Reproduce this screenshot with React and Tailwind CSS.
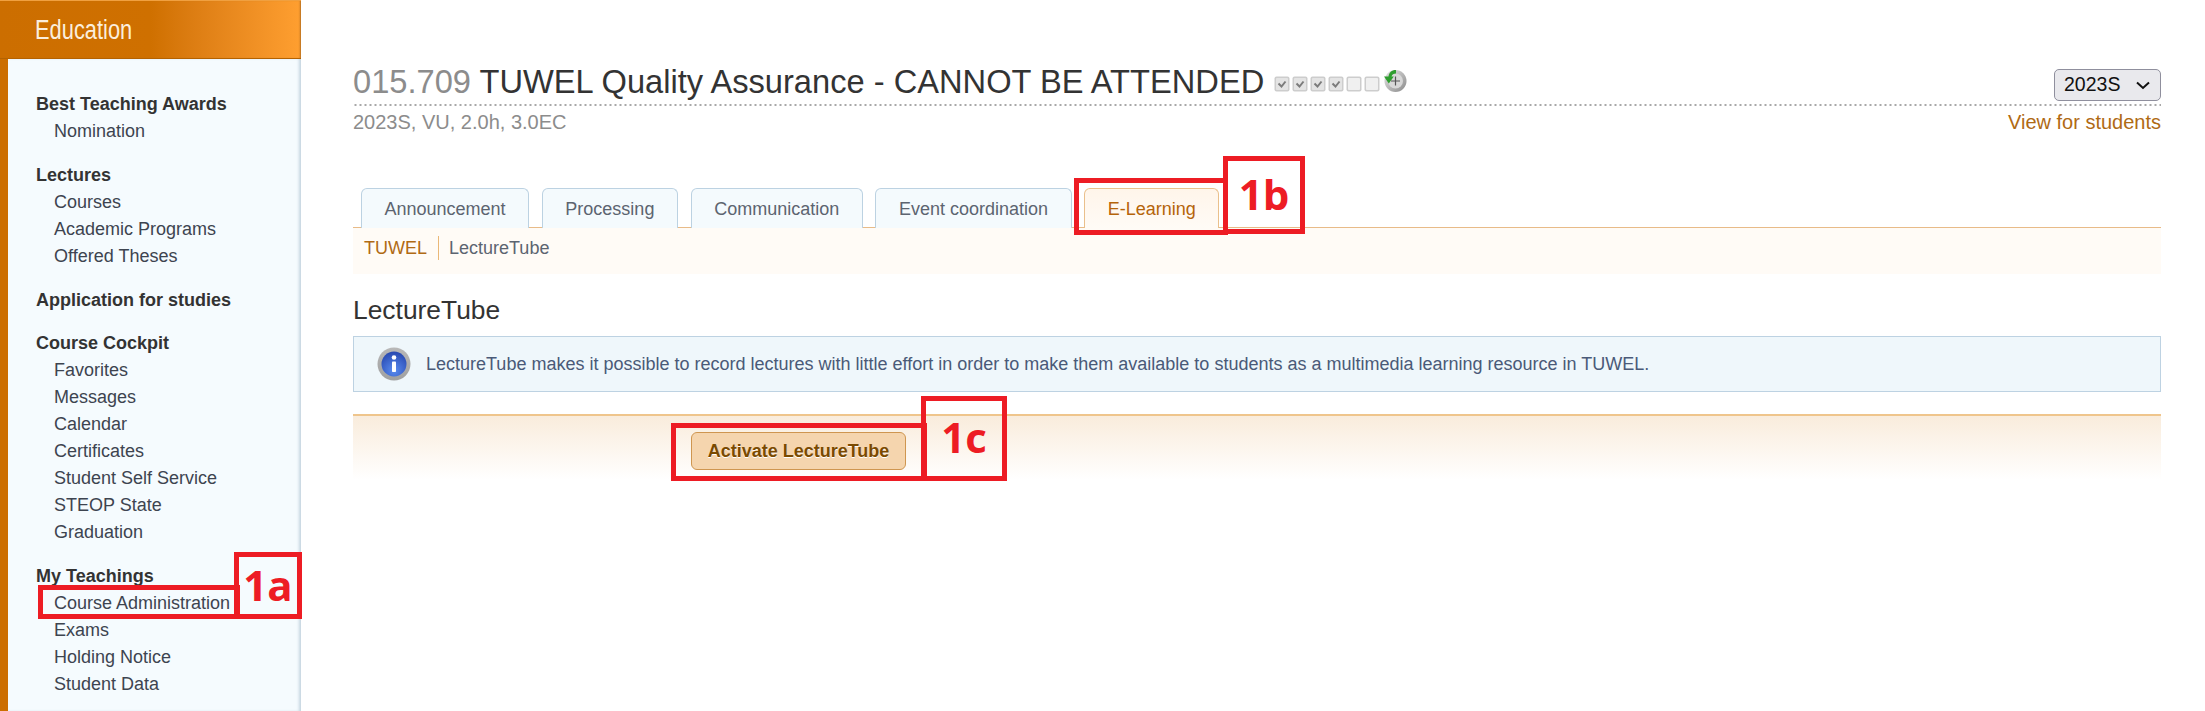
const navGroups = [
  { title: "Best Teaching Awards", items: ["Nomination"] },
  { title: "Lectures", items: ["Courses", "Academic Programs", "Offered Theses"] },
  { title: "Application for studies", items: [] },
  {
    title: "Course Cockpit",
    items: ["Favorites", "Messages", "Calendar", "Certificates", "Student Self Service", "STEOP State", "Graduation"],
  },
  { title: "My Teachings", items: ["Course Administration", "Exams", "Holding Notice", "Student Data"] },
];

const tabs = ["Announcement", "Processing", "Communication", "Event coordination"];

const CheckBox = ({ checked }) => (
  <svg width="16" height="16" viewBox="0 0 16 16" className="shrink-0">
    <rect x="0.5" y="0.5" width="15" height="15" rx="2" fill="#cdcdcd" />
    <rect x="2" y="2" width="12" height="12" rx="1" fill={checked ? "#e4e4e4" : "#f0f0f0"} />
    {checked && <path d="M4.5 7.5 L7.5 10.5 L11.5 5.5" fill="none" stroke="#7c7c7c" strokeWidth="2" />}
  </svg>
);

const ClockIcon = () => (
  <svg width="24" height="24" viewBox="0 0 24 24" className="shrink-0 ml-[1px] -mt-[7px]">
    <defs>
      <linearGradient id="clockRing" x1="0" y1="0" x2="1" y2="1">
        <stop offset="0" stopColor="#e6e6e6" />
        <stop offset="1" stopColor="#8a8a8a" />
      </linearGradient>
    </defs>
    <circle cx="12.5" cy="12" r="11" fill="url(#clockRing)" />
    <circle cx="12.5" cy="12" r="7.5" fill="#d8d8d8" />
    <path d="M12.5 7.5 V16.5 M8 12 H17" stroke="#555" strokeWidth="1.2" fill="none" />
    <path d="M13 1 C8.5 1 6 3.5 5.5 7.5 H1 L5.8 14.5 L10.8 7.5 H8.5 C9 5.5 10.5 4.5 13 4.5 Z" fill="#2f9e2f" />
  </svg>
);

const InfoIcon = () => (
  <svg width="36" height="36" viewBox="0 0 36 36" className="shrink-0">
    <defs>
      <linearGradient id="infoRing" x1="0" y1="0" x2="0" y2="1">
        <stop offset="0" stopColor="#b8b8b8" />
        <stop offset="1" stopColor="#a0a0a0" />
      </linearGradient>
      <radialGradient id="infoFill" cx="0.5" cy="0.75" r="0.7">
        <stop offset="0" stopColor="#5a8cf0" />
        <stop offset="1" stopColor="#2a4cb4" />
      </radialGradient>
    </defs>
    <circle cx="18" cy="18" r="16.5" fill="url(#infoRing)" />
    <circle cx="18" cy="18" r="12.5" fill="url(#infoFill)" />
    <circle cx="18" cy="11.5" r="2.3" fill="#fff" />
    <rect x="16" y="15.5" width="4" height="10.5" rx="0.8" fill="#fff" />
  </svg>
);

const Tab = ({ label, active }) => (
  <div
    className={
      active
        ? "h-[40px] -mb-[1px] pt-[1px] px-[22.5px] flex items-center rounded-t-[6px] border border-b-0 border-[#eac08c] bg-gradient-to-b from-[#fff5ea] to-[#fffbf6] text-[#b5640a]"
        : "h-[40px] -mb-[1px] pt-[1px] px-[22.5px] flex items-center rounded-t-[6px] border border-b-0 border-[#bcd2e2] bg-[#f4fafd] text-[#5c6470]"
    }
  >
    {label}
  </div>
);

export default function App() {
  return (
    <div className="relative flex h-[711px] w-[2205px] overflow-hidden bg-white font-['Liberation_Sans',Arial,sans-serif] text-[18px] text-[#333]">
      {/* sidebar */}
      <aside className="w-[301px] shrink-0 flex flex-col bg-[#cc6e00]">
        <div className="h-[59px] shrink-0 pl-[35px] pt-[1px] flex items-center border-t border-t-[#f0a040] border-b border-b-[#b56200] bg-gradient-to-r from-[#cc6e00] via-[#cf7000] to-[#ff9f30] shadow-[inset_-2px_0_2px_-1px_#b56f20]">
          <span className="inline-block origin-left scale-x-[0.81] text-[27px] text-[#fbeedd]">Education</span>
        </div>
        <nav className="ml-[8px] flex-1 pt-[31px] pl-[28px] flex flex-col gap-[15.75px] bg-[#f5fbfe] shadow-[inset_-3px_0_3px_-1px_#c5d5e0]">
          {navGroups.map((group) => (
            <div key={group.title}>
              <div className="h-[28px] leading-[28px] font-bold text-[#333]">{group.title}</div>
              <ul className="pl-[18px]">
                {group.items.map((item) => (
                  <li key={item} className="h-[27px] leading-[27px] text-[#3d4450]">
                    {item}
                  </li>
                ))}
              </ul>
            </div>
          ))}
        </nav>
      </aside>

      {/* main */}
      <main className="ml-[52px] w-[1808px] pt-[60px]">
        <div className="flex items-end justify-between h-[46px] pb-[5px] bg-[linear-gradient(to_right,#a8a8a8_40%,transparent_40%)] bg-[length:5px_2px] bg-bottom bg-repeat-x">
          <div className="flex items-center">
            <h1 className="text-[32.65px] leading-[38px] text-[#333] pt-[2px]">
              <span className="text-[#8c8c8c]">015.709</span> TUWEL Quality Assurance - CANNOT BE ATTENDED
            </h1>
            <div className="ml-[10px] mt-[6px] flex items-center gap-[2px]">
              <CheckBox checked />
              <CheckBox checked />
              <CheckBox checked />
              <CheckBox checked />
              <CheckBox />
              <CheckBox />
              <ClockIcon />
            </div>
          </div>
          <div className="w-[107px] h-[32px] pl-[9px] pr-[10px] flex items-center justify-between rounded-[5px] border border-[#8f8f9d] bg-[#e9e9ed] text-[19.5px] text-[#111]">
            2023S
            <svg width="14" height="14" viewBox="0 0 14 14">
              <path d="M1 4.5 L7 10 L13 4.5" fill="none" stroke="#111" strokeWidth="2" />
            </svg>
          </div>
        </div>
        <div className="flex justify-between text-[20px] leading-[26px] pt-[3px]">
          <span className="text-[#8c8c8c]">2023S, VU, 2.0h, 3.0EC</span>
          <span className="text-[#b06a14]">View for students</span>
        </div>

        <div className="mt-[53px] pl-[8px] flex gap-[12.75px] border-b border-[#e8bb88]">
          {tabs.map((tab) => (
            <Tab key={tab} label={tab} />
          ))}
          <Tab label="E-Learning" active />
        </div>
        <div className="h-[46px] pl-[11px] pt-[8px] bg-[#fffbf6] flex items-start">
          <span className="pr-[11px] border-r border-[#eab878] leading-[24px] text-[#b06a14]">TUWEL</span>
          <span className="pl-[10px] leading-[24px] text-[#5c6470]">LectureTube</span>
        </div>

        <h2 className="mt-[18px] text-[26.4px] leading-[36px] text-[#333]">LectureTube</h2>
        <div className="mt-[8px] h-[56px] pl-[22px] flex items-center gap-[14px] border border-[#bdd2e2] bg-[#eff7fb] text-[#4a5a78]">
          <InfoIcon />
          LectureTube makes it possible to record lectures with little effort in order to make them available to students as a multimedia learning resource in TUWEL.
        </div>

        <div className="mt-[22px] h-[66px] pl-[338px] pt-[16px] border-t-2 border-[#efc58c] bg-gradient-to-b from-[#f9ecdc] to-white">
          <button className="w-[215px] h-[38px] rounded-[6px] border border-[#cf9650] bg-[#f5d5ae] font-bold text-[#7a4a00] [text-shadow:0_1px_0_#fff]">
            Activate LectureTube
          </button>
        </div>
      </main>

      {/* red annotation boxes */}
      <div className="absolute left-[38px] top-[585px] w-[202px] h-[34px] border-[5px] border-[#ed1c24]" />
      <div className="absolute left-[234px] top-[552px] w-[68px] h-[67px] pb-[2px] border-[5px] border-[#ed1c24] flex items-center justify-center font-['Open_Sans',sans-serif] font-bold text-[42px] leading-none text-[#ed1c24]">1a</div>
      <div className="absolute left-[1074px] top-[178px] w-[154px] h-[57px] border-[5px] border-[#ed1c24]" />
      <div className="absolute left-[1223px] top-[156px] w-[82px] h-[78px] pb-[2px] border-[5px] border-[#ed1c24] flex items-center justify-center font-['Open_Sans',sans-serif] font-bold text-[42px] leading-none text-[#ed1c24]">1b</div>
      <div className="absolute left-[671px] top-[423px] w-[256px] h-[58px] border-[5px] border-[#ed1c24]" />
      <div className="absolute left-[921px] top-[396px] w-[86px] h-[85px] pb-[3px] border-[5px] border-[#ed1c24] flex items-center justify-center font-['Open_Sans',sans-serif] font-bold text-[42px] leading-none text-[#ed1c24]">1c</div>
    </div>
  );
}
